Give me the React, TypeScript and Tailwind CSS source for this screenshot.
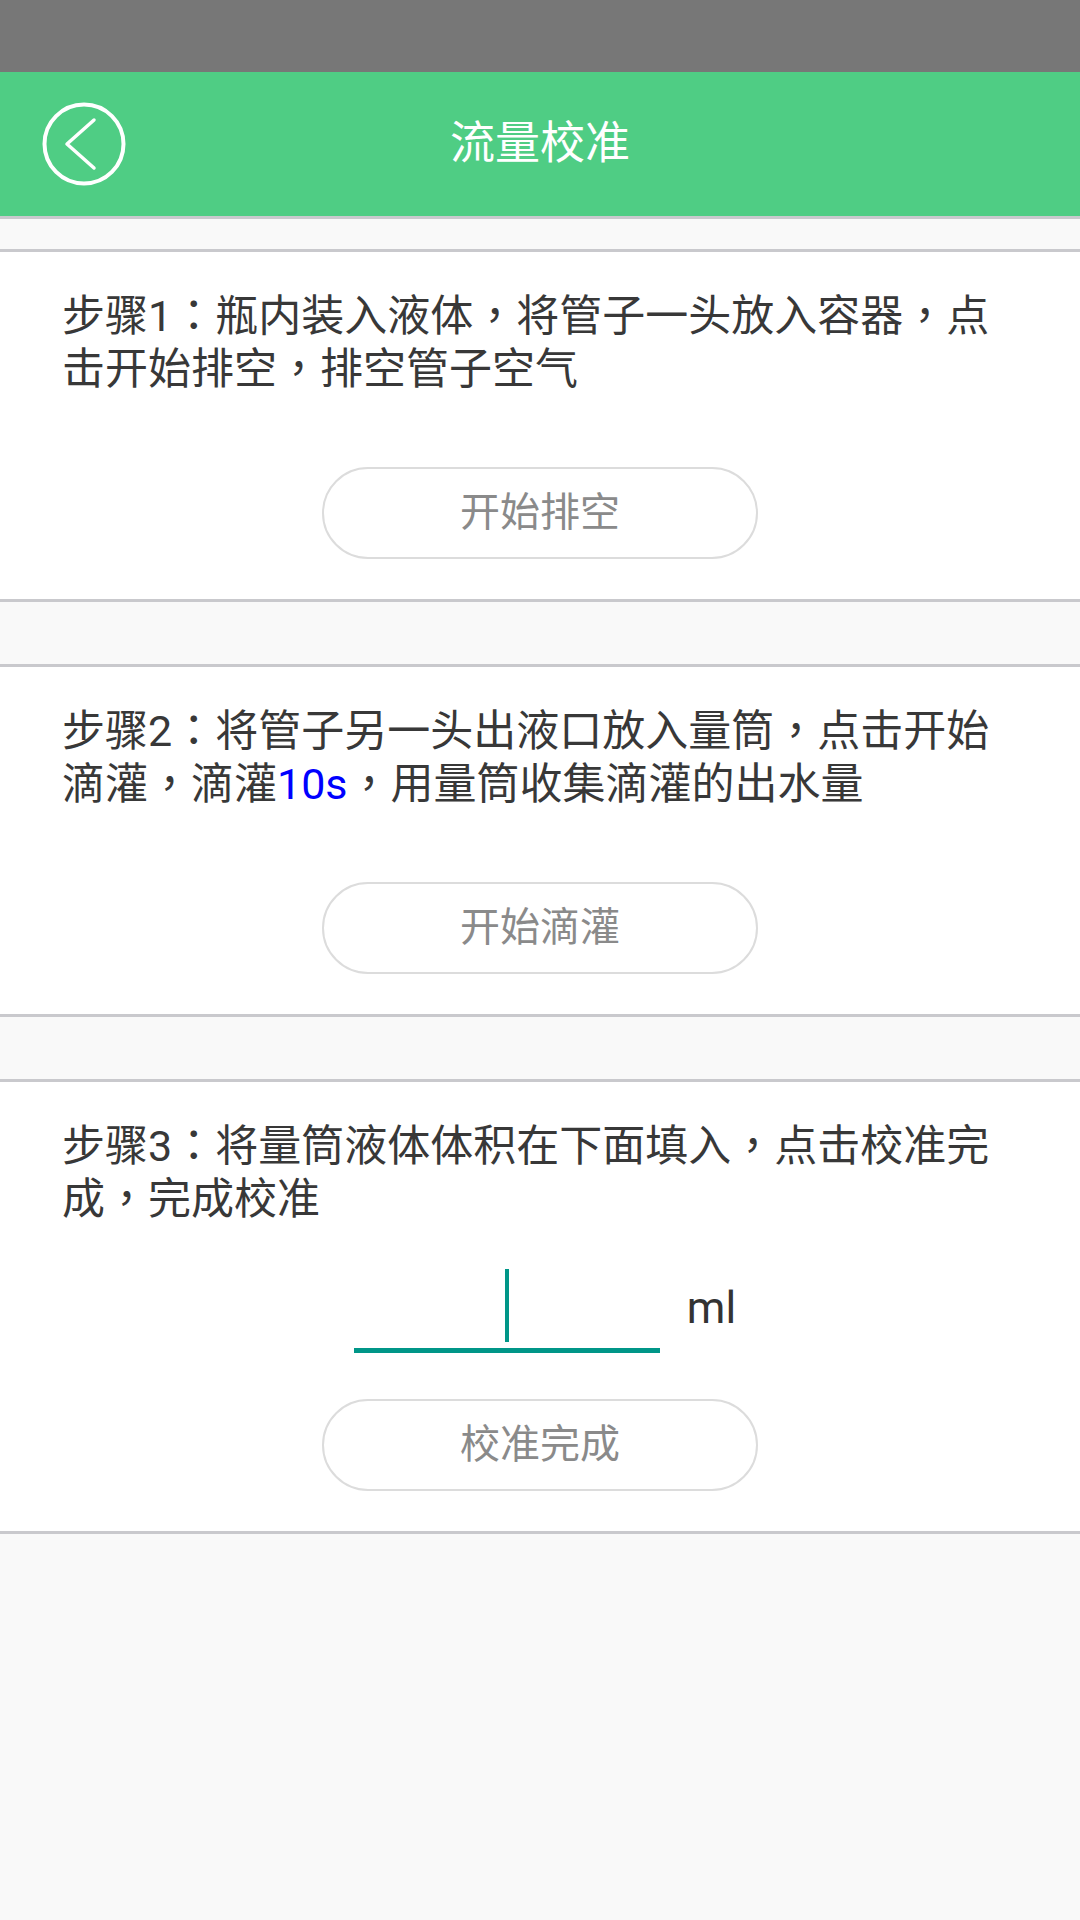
import { ReactNode } from 'react';

const font = "font-['Roboto','Noto_Sans_CJK_SC',sans-serif]";

// centred full-width punctuation, as the device font draws it
const P = ({ children }: { children: ReactNode }) => (
  <span className="font-['Roboto','Noto_Sans_CJK_TC',sans-serif]">{children}</span>
);

const BackIcon = () => (
  <svg width="84" height="84" viewBox="0 0 84 84" fill="none" aria-hidden>
    <circle cx="42" cy="42" r="39.5" stroke="white" strokeWidth="4" />
    <polyline
      points="52,18 25,42 52,66"
      stroke="white"
      strokeWidth="3.5"
      strokeLinecap="round"
      strokeLinejoin="round"
    />
  </svg>
);

const StepButton = ({ label, className = '' }: { label: string; className?: string }) => (
  <button
    type="button"
    className={`mx-auto flex h-[92px] w-[436px] items-center justify-center rounded-full border-2 border-[#dcdcdc] bg-white text-[40px] text-[#8a8a8a] ${className}`}
  >
    {label}
  </button>
);

const StepCard = ({ children }: { children: ReactNode }) => (
  <section className="border-y-[3px] border-[#c9c9cd] bg-white px-[62px] pt-[38px] pb-[40px]">
    {children}
  </section>
);

const StepText = ({ children }: { children: ReactNode }) => (
  <p className="text-[43px] leading-[53px] text-[#383838]">{children}</p>
);

const App = () => {
  return (
    <div className={`min-h-[1920px] bg-[#f9f9f9] ${font}`}>
      <div className="h-[72px] bg-[#777777]" />

      <header className="grid h-[147px] grid-cols-[1fr_auto_1fr] items-center border-b-[3px] border-[#c9c9cd] bg-[#4fcd84] pl-[42px]">
        <div className="flex items-center">
          <BackIcon />
        </div>
        <h1 className="-ml-[42px] text-[45px] font-normal text-white">流量校准</h1>
        <div />
      </header>

      <div className="flex flex-col gap-[62px] pt-[30px]">
        <StepCard>
          <StepText>
            步骤1<P>：</P>瓶内装入液体<P>，</P>将管子一头放入容器<P>，</P>点
            <br />
            击开始排空<P>，</P>排空管子空气
          </StepText>
          <StepButton label="开始排空" className="mt-[71px]" />
        </StepCard>

        <StepCard>
          <StepText>
            步骤2<P>：</P>将管子另一头出液口放入量筒<P>，</P>点击开始
            <br />
            滴灌<P>，</P>滴灌<span className="text-[#0000ff]">10s</span>
            <P>，</P>用量筒收集滴灌的出水量
          </StepText>
          <StepButton label="开始滴灌" className="mt-[71px]" />
        </StepCard>

        <StepCard>
          <StepText>
            步骤3<P>：</P>将量筒液体体积在下面填入<P>，</P>点击校准完
            <br />
            成<P>，</P>完成校准
          </StepText>

          <div className="mt-[37px] ml-[10px] flex items-center justify-center gap-[27px]">
            <div className="flex h-[90px] w-[306px] items-center justify-center border-b-[5px] border-[#009688]">
              <div className="h-[73px] w-[4px] bg-[#009688]" />
            </div>
            <span className="text-[44px] leading-[52px] text-[#333333]">ml</span>
          </div>

          <StepButton label="校准完成" className="mt-[46px]" />
        </StepCard>
      </div>
    </div>
  );
};

export default App;
